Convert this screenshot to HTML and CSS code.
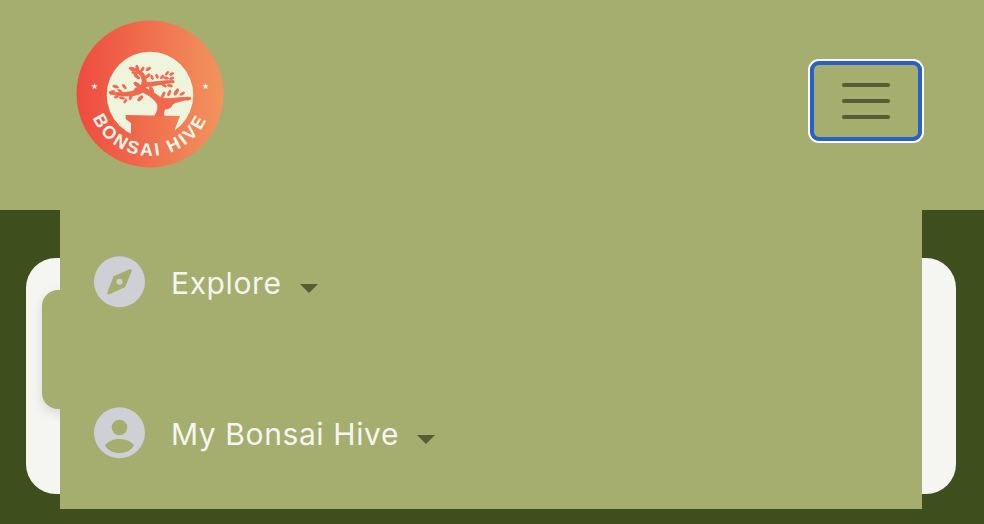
FILE: index.html
```html
<!DOCTYPE html>
<html lang="en">
<head>
    <meta charset="UTF-8">
    <title>Bonsai Hive</title>
    <link rel="stylesheet" href="styles.css">
</head>
<body>

<header class="header">
    <svg class="logo" viewBox="0 0 148 148" width="148" height="148">
        <defs>
            <linearGradient id="logoGrad" gradientUnits="userSpaceOnUse" x1="1" y1="0" x2="147" y2="0">
                <stop offset="0" stop-color="#ee4b40"/>
                <stop offset="1" stop-color="#f2945c"/>
            </linearGradient>
            <path id="logoArc" d="M12 74 A62 62 0 0 0 136 74"/>
        </defs>
        <circle cx="74" cy="74" r="73.5" fill="url(#logoGrad)"/>
        <circle cx="74" cy="75" r="43.3" fill="#eff5dc"/>
        <!-- pot -->
        <path d="M49.7 95 L104 96 L99 109 L99 125 L55 125 L55 103 L49.7 99 Z" fill="url(#logoGrad)"/>
        <!-- tree, drawn in zoomed coordinates -->
        <g transform="translate(-16 -10) scale(.3333)" fill="#f0694f" stroke="#f0694f" stroke-width="2.5">
            <path d="M284 318 C298 295 298 282 276 264 C258 248 235 244 222 238 L245 224 C262 240 285 248 298 260 C320 272 360 260 392 262 L392 268 C355 272 328 284 318 294 C310 302 310 310 312 318 Z"/>
            <path d="M150 246 C185 249 210 250 240 234 L250 246 C220 264 185 259 150 252 Z"/>
            <path d="M234 240 C250 225 250 205 238 193 C232 185 222 180 210 176 L212 171 C230 175 244 182 252 192 C260 204 262 225 252 244 Z"/>
            <path d="M252 216 C275 220 310 210 342 212 L342 218 C310 219 280 230 256 230 Z"/>
            <ellipse cx="215" cy="178" rx="9" ry="3.5" transform="rotate(30 215 178)"/>
            <ellipse cx="232" cy="173" rx="8" ry="3.5" transform="rotate(70 232 173)"/>
            <ellipse cx="247" cy="178" rx="8" ry="3.5" transform="rotate(-60 247 178)"/>
            <ellipse cx="265" cy="177" rx="8" ry="3.5" transform="rotate(-30 265 177)"/>
            <ellipse cx="224" cy="189" rx="9" ry="3.5" transform="rotate(15 224 189)"/>
            <ellipse cx="231" cy="200" rx="10" ry="4" transform="rotate(35 231 200)"/>
            <ellipse cx="263" cy="198" rx="9" ry="4" transform="rotate(-40 263 198)"/>
            <ellipse cx="231" cy="224" rx="11" ry="5" transform="rotate(35 231 224)"/>
            <ellipse cx="276" cy="202" rx="7" ry="3" transform="rotate(70 276 202)"/>
            <ellipse cx="291" cy="199" rx="7" ry="3" transform="rotate(70 291 199)"/>
            <ellipse cx="306" cy="201" rx="7" ry="3" transform="rotate(-60 306 201)"/>
            <ellipse cx="321" cy="190" rx="7" ry="3" transform="rotate(-50 321 190)"/>
            <ellipse cx="335" cy="192" rx="7" ry="3" transform="rotate(-25 335 192)"/>
            <ellipse cx="318" cy="204" rx="8" ry="3" transform="rotate(10 318 204)"/>
            <ellipse cx="335" cy="205" rx="7" ry="3" transform="rotate(-20 335 205)"/>
            <ellipse cx="312" cy="226" rx="8" ry="3.5" transform="rotate(30 312 226)"/>
            <ellipse cx="330" cy="227" rx="8" ry="3.5" transform="rotate(15 330 227)"/>
            <ellipse cx="275" cy="240" rx="11" ry="4.5" transform="rotate(65 275 240)"/>
            <ellipse cx="310" cy="254" rx="9" ry="3.5" transform="rotate(-65 310 254)"/>
            <ellipse cx="328" cy="249" rx="9" ry="3.5" transform="rotate(-65 328 249)"/>
            <ellipse cx="349" cy="246" rx="11" ry="4.5" transform="rotate(-60 349 246)"/>
            <ellipse cx="367" cy="251" rx="8" ry="3" transform="rotate(-30 367 251)"/>
            <ellipse cx="382" cy="266" rx="8" ry="3.5" transform="rotate(10 382 266)"/>
            <ellipse cx="352" cy="270" rx="8" ry="3.5" transform="rotate(25 352 270)"/>
            <ellipse cx="336" cy="280" rx="8" ry="3.5" transform="rotate(-30 336 280)"/>
            <ellipse cx="326" cy="290" rx="11" ry="4.5" transform="rotate(-30 326 290)"/>
            <ellipse cx="167" cy="230" rx="9" ry="3.5" transform="rotate(15 167 230)"/>
            <ellipse cx="193" cy="230" rx="8" ry="3.5" transform="rotate(50 193 230)"/>
            <ellipse cx="180" cy="243" rx="8" ry="3" transform="rotate(35 180 243)"/>
            <ellipse cx="156" cy="246" rx="9" ry="3.5" transform="rotate(-15 156 246)"/>
            <ellipse cx="170" cy="260" rx="8" ry="3" transform="rotate(-20 170 260)"/>
            <ellipse cx="186" cy="264" rx="8" ry="3" transform="rotate(10 186 264)"/>
            <ellipse cx="196" cy="273" rx="7" ry="3" transform="rotate(-60 196 273)"/>
            <ellipse cx="212" cy="262" rx="8" ry="3.5" transform="rotate(-70 212 262)"/>
            <ellipse cx="241" cy="265" rx="10" ry="4.5" transform="rotate(-45 241 265)"/>
        </g>
        <g fill="#fff" font-family="'DejaVu Sans', sans-serif" font-size="8">
            <text x="18.5" y="68.5" text-anchor="middle">★</text>
            <text x="129.5" y="68.5" text-anchor="middle">★</text>
        </g>
        <text fill="#fdf8ea" font-family="'Liberation Sans Narrow', 'Liberation Sans', sans-serif" font-weight="700" font-size="18" letter-spacing="2.6">
            <textPath href="#logoArc" startOffset="50%" text-anchor="middle">BONSAI HIVE</textPath>
        </text>
    </svg>

    <div class="toggler">
        <span class="toggler-line"></span>
        <span class="toggler-line"></span>
        <span class="toggler-line"></span>
    </div>
</header>

<div class="page">
    <div class="card">
        <div class="panel"></div>
    </div>

    <nav class="menu">
        <div class="menu-item">
            <span class="menu-icon">
                <svg viewBox="0 0 52 52" width="52" height="52">
                    <circle cx="25.5" cy="25.7" r="25.5" fill="#cfcfd6"/>
                    <path d="M36.3 14.6 L20.8 21.3 L14.8 37 L30 30 Z" fill="#a5ad6f" stroke="#a5ad6f" stroke-width="3" stroke-linejoin="round"/>
                    <circle cx="25.5" cy="25.7" r="3" fill="#cfcfd6"/>
                </svg>
            </span>
            <span class="menu-label">Explore</span>
            <span class="caret"></span>
        </div>
        <div class="menu-item">
            <span class="menu-icon">
                <svg viewBox="0 0 52 52" width="52" height="52">
                    <circle cx="25.5" cy="25.7" r="25.5" fill="#cfcfd6"/>
                    <circle cx="25.5" cy="20.5" r="7.8" fill="#a5ad6f"/>
                    <path d="M11 38.5 C13.5 34.5 19 32 25.5 32 C32 32 37.5 34.5 40 38.5 C37 43.5 31.5 46 25.5 46 C19.5 46 14 43.5 11 38.5 Z" fill="#a5ad6f"/>
                </svg>
            </span>
            <span class="menu-label">My Bonsai Hive</span>
            <span class="caret"></span>
        </div>
    </nav>
</div>

</body>
</html>
```

FILE: styles.css
```css
html, body {
    margin: 0;
    height: 524px;
    overflow: hidden;
}
body {
    font-family: Inter, "Noto Sans", sans-serif;
    background: #3e4f1d;
}
.header {
    height: 210px;
    box-sizing: border-box;
    padding: 20px 62px 0 76px;
    background: #a5ad6f;
    display: flex;
    justify-content: space-between;
    align-items: flex-start;
}
.logo {
    display: block;
}
.toggler {
    width: 112px;
    height: 80px;
    margin-top: 41px;
    box-sizing: border-box;
    border: 4px solid #2860c8;
    box-shadow: 0 0 0 2px #fff;
    border-radius: 9px;
    display: flex;
    flex-direction: column;
    justify-content: center;
    align-items: center;
    gap: 12px;
}
.toggler-line {
    width: 48px;
    height: 4px;
    border-radius: 2px;
    background: #585c36;
}
.page {
    position: relative;
    height: 314px;
    box-sizing: border-box;
    padding: 48px 28px 0 26px;
}
.card {
    height: 236px;
    box-sizing: border-box;
    padding: 32px 16px;
    background: #f5f6f1;
    border-radius: 30px;
}
.panel {
    width: 600px;
    height: 119px;
    background: #a5ad6f;
    border-radius: 16px;
    box-shadow: 0 4px 12px rgba(0,0,0,0.12);
}
.menu {
    position: absolute;
    top: 0;
    left: 60px;
    width: 862px;
    height: 299px;
    box-sizing: border-box;
    padding: 46px 34px 0;
    background: #a5ad6f;
    display: flex;
    flex-direction: column;
    gap: 99px;
}
.menu-item {
    height: 52px;
    display: flex;
    align-items: center;
}
.menu-icon {
    width: 52px;
    height: 52px;
    flex-shrink: 0;
}
.menu-icon svg {
    display: block;
}
.menu-label {
    margin: 2px 0 0 25px;
    font-size: 30px;
    letter-spacing: 0.6px;
    color: #f5f6ef;
}
.caret {
    margin: 12px 0 0 18px;
    border-top: 9px solid #585c36;
    border-left: 9px solid transparent;
    border-right: 9px solid transparent;
}
```
